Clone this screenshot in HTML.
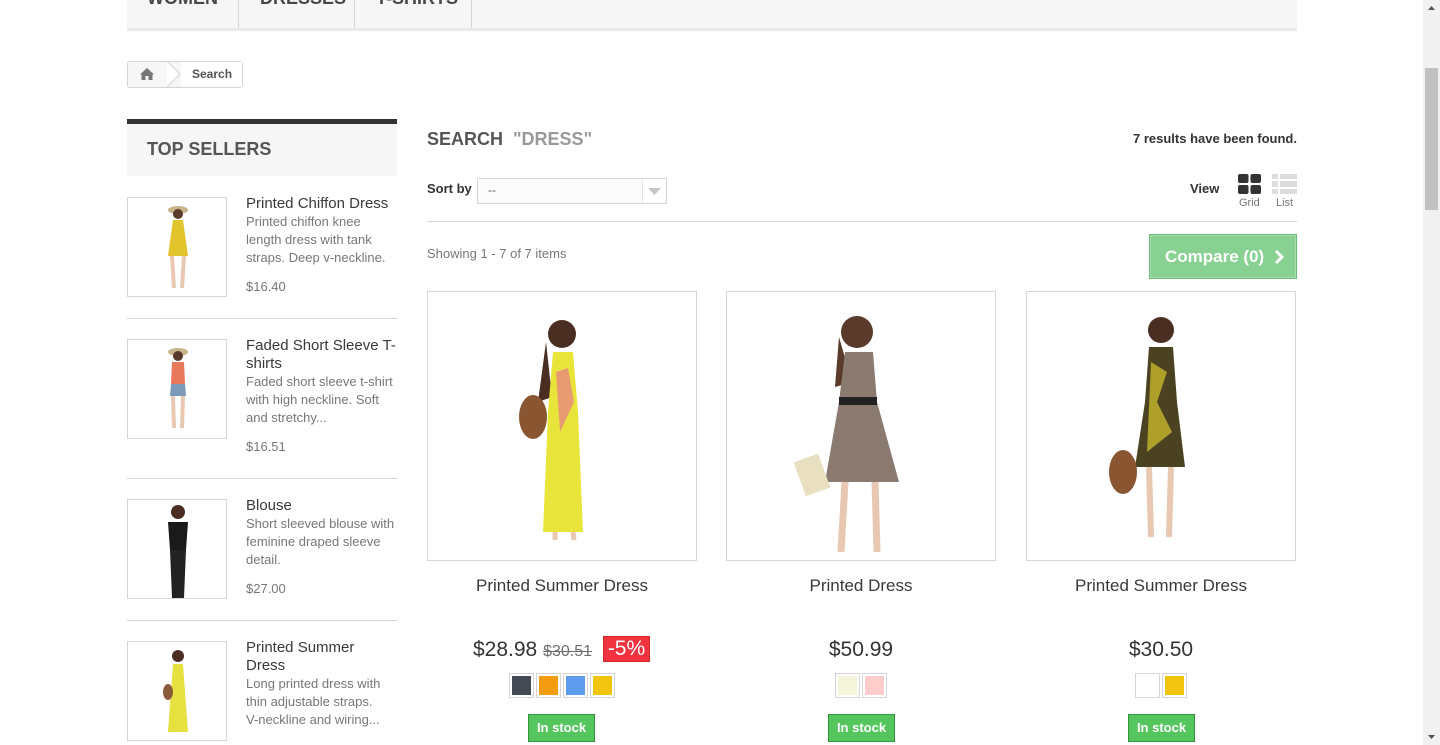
<!DOCTYPE html>
<html><head><meta charset="utf-8"><style>
*{box-sizing:border-box;margin:0;padding:0}
body{width:1440px;height:745px;overflow:hidden;background:#fff;font-family:"Liberation Sans",Arial,sans-serif;position:relative;color:#777}
.a{position:absolute}
.nav{left:127px;top:0;width:1170px;height:31px;background:#f6f6f6;border-bottom:3px solid #e9e9e9}
.tab{position:absolute;top:-12px;font:bold 18px "Liberation Sans",sans-serif;color:#484848;text-transform:uppercase}
.sep{position:absolute;top:0;width:1px;height:28px;background:#d6d4d4}
.bc{left:127px;top:61px;width:116px;height:27px;border:1px solid #d6d4d4;border-radius:3px;background:#f6f6f6}
.ts{left:127px;top:119px;width:270px;height:57px;border-top:5px solid #333;background:#f6f6f6;font:bold 18px "Liberation Sans",sans-serif;color:#555;padding:15px 0 0 20px}
.thumb{width:100px;height:100px;border:1px solid #d6d4d4;background:#fff}
.it .n{font-size:15px;color:#3a3939;line-height:18px}
.it .d{font-size:13px;color:#777;line-height:18px}
.it .p{font-size:13px;color:#777}
.hr{height:1px;background:#d6d4d4;width:270px;left:127px}
.pbox{width:270px;height:270px;border:1px solid #d6d4d4;background:#fff;top:291px}
.pn{width:270px;text-align:center;top:576px;font-size:17px;color:#3a3939}
.pr{width:270px;text-align:center;top:638px;font:21px "Liberation Sans",sans-serif;color:#333}
.sw{display:inline-block;width:25px;height:25px;border:1px solid #d6d4d4;margin:0 1px;padding:2px}
.sw i{display:block;width:100%;height:100%}
.st{top:714px;width:67px;height:28px;background:#55c65e;border:1px solid #36943e;color:#fff;font:bold 13px "Liberation Sans",sans-serif;text-align:center;line-height:26px}
</style></head><body>
<div class="a nav">
<span class="tab" style="left:20px">Women</span><div class="sep" style="left:111px"></div>
<span class="tab" style="left:133px">Dresses</span><div class="sep" style="left:227px"></div>
<span class="tab" style="left:249px">T-shirts</span><div class="sep" style="left:344px"></div>
</div>
<div class="a bc">
<svg class="a" style="left:11px;top:5px" width="16" height="14" viewBox="0 0 16 14"><path d="M8 1 L1 7.5 L2.5 7.5 L2.5 13 L6.5 13 L6.5 9 L9.5 9 L9.5 13 L13.5 13 L13.5 7.5 L15 7.5 Z" fill="#777"/></svg>
<svg class="a" style="left:38px;top:-1px" width="16" height="27"><path d="M1 0 L14 13 L1 26" fill="#fff" stroke="#d6d4d4"/></svg>
<div class="a" style="left:53px;top:0;width:61px;height:25px;background:#fff"></div>
<span class="a" style="left:64px;top:5px;font:bold 12px 'Liberation Sans';color:#555">Search</span>
</div>
<div class="a ts">TOP SELLERS</div>

<div class="a thumb" style="left:127px;top:197px"><svg width="98" height="98" viewBox="0 0 98 98"><ellipse cx="50" cy="12" rx="10" ry="4" fill="#c8b48a"/><circle cx="50" cy="16" r="5" fill="#5a3a2a"/><path d="M45 22 L55 22 L60 58 L40 58 Z" fill="#e2c52c"/><path d="M44 58 L46 90 M56 58 L54 90" stroke="#e8c8b0" stroke-width="4"/></svg></div>
<div class="a it" style="left:246px;top:195px;width:150px"><div class="n">Printed Chiffon Dress</div><div class="d">Printed chiffon knee length dress with tank straps. Deep v-neckline.</div><div class="p" style="margin-top:12px">$16.40</div></div>
<div class="a hr" style="top:318px"></div>

<div class="a thumb" style="left:127px;top:339px"><svg width="98" height="98" viewBox="0 0 98 98"><ellipse cx="50" cy="12" rx="10" ry="4" fill="#c8b48a"/><circle cx="50" cy="16" r="5" fill="#5a3a2a"/><path d="M44 22 L56 22 L57 44 L43 44 Z" fill="#e8785a"/><path d="M43 44 L57 44 L58 56 L42 56 Z" fill="#7a9ab8"/><path d="M45 56 L46 88 M55 56 L54 88" stroke="#e8c8b0" stroke-width="4"/></svg></div>
<div class="a it" style="left:246px;top:337px;width:150px"><div class="n">Faded Short Sleeve T-shirts</div><div class="d">Faded short sleeve t-shirt with high neckline. Soft and stretchy...</div><div class="p" style="margin-top:12px">$16.51</div></div>
<div class="a hr" style="top:478px"></div>

<div class="a thumb" style="left:127px;top:499px"><svg width="98" height="98" viewBox="0 0 98 98"><circle cx="50" cy="12" r="7" fill="#4a2e22"/><path d="M40 22 L60 22 L58 50 L42 50 Z" fill="#1a1a1a"/><path d="M42 50 L58 50 L56 98 L44 98 Z" fill="#222"/></svg></div>
<div class="a it" style="left:246px;top:497px;width:150px"><div class="n">Blouse</div><div class="d">Short sleeved blouse with feminine draped sleeve detail.</div><div class="p" style="margin-top:12px">$27.00</div></div>
<div class="a hr" style="top:620px"></div>

<div class="a thumb" style="left:127px;top:641px"><svg width="98" height="98" viewBox="0 0 98 98"><circle cx="50" cy="14" r="6" fill="#4a2e22"/><path d="M45 22 L55 22 L60 90 L40 90 Z" fill="#e6e040"/><ellipse cx="40" cy="50" rx="5" ry="8" fill="#8a5a3a"/></svg></div>
<div class="a it" style="left:246px;top:639px;width:140px"><div class="n">Printed Summer Dress</div><div class="d">Long printed dress with thin adjustable straps. V-neckline and wiring...</div></div>

<div class="a" style="left:427px;top:129px;font:bold 18px 'Liberation Sans',sans-serif;color:#555">SEARCH&nbsp; <span style="color:#999">"DRESS"</span></div>
<div class="a" style="left:1080px;top:131px;width:217px;text-align:right;font:bold 13px 'Liberation Sans';color:#333">7 results have been found.</div>
<div class="a" style="left:427px;top:181px;font:bold 13px 'Liberation Sans';color:#333">Sort by</div>
<div class="a" style="left:477px;top:178px;width:190px;height:26px;border:1px solid #d6d4d4;background:#fbfbfb"><span class="a" style="left:10px;top:4px;font-size:12px;color:#555">--</span><div class="a" style="right:1px;top:1px;width:23px;height:22px;background:#fff;border-left:1px solid #e5e5e5"><svg width="23" height="22"><path d="M5 8 L18 8 L11.5 15 Z" fill="#c5c5c5"/></svg></div></div>
<div class="a" style="left:1190px;top:181px;font:bold 13px 'Liberation Sans';color:#333">View</div>
<svg class="a" style="left:1238px;top:174px" width="23" height="20"><rect x="0" y="0" width="10.5" height="9" rx="2" fill="#333"/><rect x="12.5" y="0" width="10.5" height="9" rx="2" fill="#333"/><rect x="0" y="11" width="10.5" height="9" rx="2" fill="#333"/><rect x="12.5" y="11" width="10.5" height="9" rx="2" fill="#333"/></svg>
<svg class="a" style="left:1272px;top:174px" width="25" height="20"><g fill="#ddd"><rect x="0" y="0" width="6" height="5"/><rect x="8" y="0" width="17" height="5"/><rect x="0" y="7" width="6" height="6"/><rect x="8" y="7" width="17" height="6"/><rect x="0" y="15" width="6" height="5"/><rect x="8" y="15" width="17" height="5"/></g></svg>
<div class="a" style="left:1239px;top:197px;font-size:11px;color:#777">Grid</div>
<div class="a" style="left:1276px;top:197px;font-size:11px;color:#777">List</div>
<div class="a" style="left:427px;top:221px;width:870px;height:1px;background:#d6d4d4"></div>
<div class="a" style="left:427px;top:246px;font-size:13px;color:#777">Showing 1 - 7 of 7 items</div>
<div class="a" style="left:1149px;top:234px;width:148px;height:45px;background:#89d093;border:1px solid #6cba78;box-shadow:inset 0 0 0 1px #a9dcb0;color:#fff;font:bold 17px 'Liberation Sans';padding:12px 0 0 15px">Compare (0)<svg style="position:absolute;left:124px;top:15px" width="10" height="14"><path d="M2 1 L8 7 L2 13" fill="none" stroke="#fff" stroke-width="3"/></svg></div>

<div class="a pbox" style="left:427px"><svg width="268" height="268"><circle cx="134" cy="42" r="14" fill="#4a2e22"/><path d="M118 50 L110 110 L124 105 Z" fill="#4a2e22"/><path d="M125 60 L145 60 L150 120 L155 240 L115 240 L120 120 Z" fill="#e8e43a"/><path d="M128 80 L140 76 L146 110 L132 140 Z" fill="#e87a8a" opacity=".7"/><ellipse cx="105" cy="125" rx="14" ry="22" fill="#8a5632"/><path d="M127 240 L127 248 M145 240 L146 248" stroke="#e8c8b0" stroke-width="5"/></svg></div>
<div class="a pbox" style="left:726px"><svg width="268" height="268"><circle cx="130" cy="40" r="16" fill="#5a3a2a"/><path d="M112 45 L108 95 L125 90 Z" fill="#5a3a2a"/><path d="M118 60 L146 60 L150 110 L172 190 L98 190 L112 110 Z" fill="#8a7a70"/><rect x="112" y="105" width="38" height="8" fill="#222"/><path d="M118 190 L114 260 M148 190 L150 260" stroke="#e8c8b0" stroke-width="7"/><rect x="72" y="165" width="26" height="36" fill="#e8e0c0" transform="rotate(-20 85 183)"/></svg></div>
<div class="a pbox" style="left:1026px"><svg width="268" height="268"><circle cx="134" cy="38" r="13" fill="#4a2e22"/><path d="M122 55 L146 55 L150 110 L158 175 L108 175 L118 110 Z" fill="#4a4220"/><path d="M124 70 L140 80 L130 110 L145 140 L120 160 Z" fill="#d8c830" opacity=".7"/><ellipse cx="96" cy="180" rx="14" ry="22" fill="#8a5632"/><path d="M122 175 L124 245 M144 175 L142 245" stroke="#e8c8b0" stroke-width="6"/></svg></div>

<div class="a pn" style="left:427px">Printed Summer Dress</div>
<div class="a pn" style="left:726px">Printed Dress</div>
<div class="a pn" style="left:1026px">Printed Summer Dress</div>

<div class="a" style="left:473px;top:638px;font:21px 'Liberation Sans',sans-serif;color:#333">$28.98 <span style="font-size:16px;color:#6f6f6f;text-decoration:line-through">$30.51</span></div>
<div class="a" style="left:603px;top:636px;width:47px;height:26px;background:#f13340;border:1px solid #d02a2c;color:#fff;font:21px 'Liberation Sans';text-align:center;line-height:24px">-5%</div>
<div class="a pr" style="left:726px">$50.99</div>
<div class="a pr" style="left:1026px">$30.50</div>

<div class="a" style="left:427px;top:673px;width:270px;text-align:center;font-size:0"><span class="sw"><i style="background:#434a54"></i></span><span class="sw"><i style="background:#f39c11"></i></span><span class="sw"><i style="background:#5d9cec"></i></span><span class="sw"><i style="background:#f1c40f"></i></span></div>
<div class="a" style="left:726px;top:673px;width:270px;text-align:center;font-size:0"><span class="sw"><i style="background:#f5f5dc"></i></span><span class="sw"><i style="background:#fcc"></i></span></div>
<div class="a" style="left:1026px;top:673px;width:270px;text-align:center;font-size:0"><span class="sw"><i style="background:#fff"></i></span><span class="sw"><i style="background:#f1c40f"></i></span></div>

<div class="a st" style="left:528px">In stock</div>
<div class="a st" style="left:828px">In stock</div>
<div class="a st" style="left:1128px">In stock</div>

<div class="a" style="left:1423px;top:0;width:17px;height:745px;background:#f1f1f1"></div>
<div class="a" style="left:1425px;top:68px;width:13px;height:142px;background:#c1c1c1"></div>
<svg class="a" style="left:1423px;top:0" width="17" height="17"><path d="M5 10 L8.5 6 L12 10 Z" fill="#505050"/></svg>
<svg class="a" style="left:1423px;top:728px" width="17" height="17"><path d="M5 7 L8.5 11 L12 7 Z" fill="#505050"/></svg>
</body></html>
